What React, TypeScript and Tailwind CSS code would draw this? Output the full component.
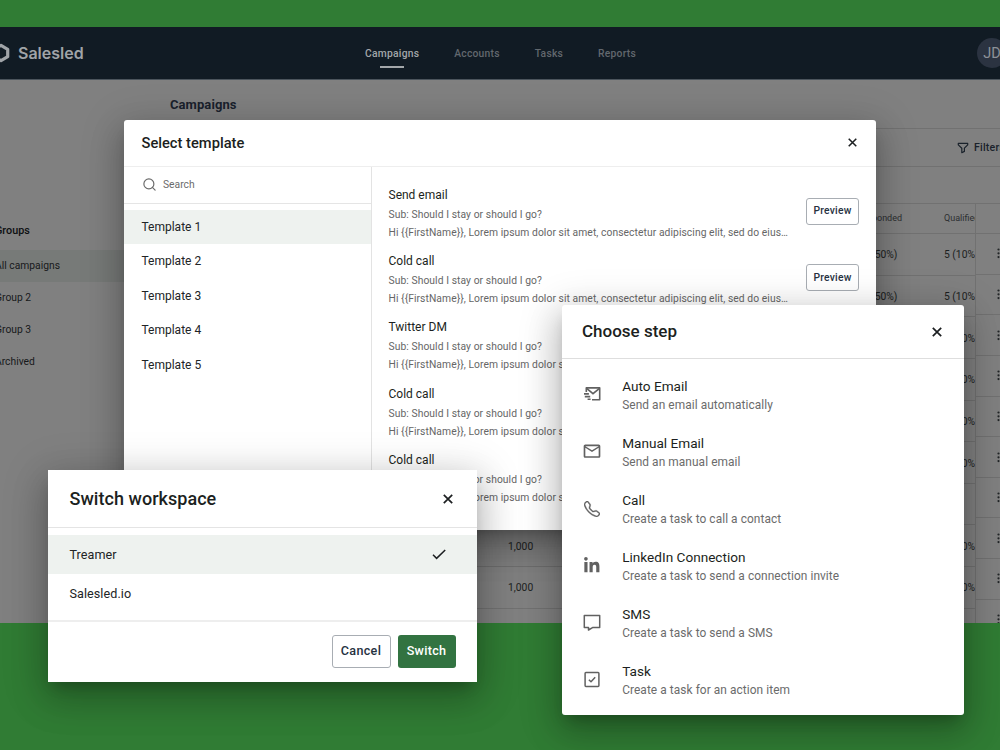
import React, { useState } from "react";
import { BsTelephone } from "react-icons/bs";
import { FaLinkedinIn } from "react-icons/fa";
import { MdOutlineEmail } from "react-icons/md";
import { Search } from "lucide-react";

const NAV = ["Campaigns", "Accounts", "Tasks", "Reports"];
const GROUPS = ["All campaigns", "Group 2", "Group 3", "Archived"];
const TEMPLATES = ["Template 1", "Template 2", "Template 3", "Template 4", "Template 5"];
const MESSAGES = ["Send email", "Cold call", "Twitter DM", "Cold call", "Cold call"];
const WORKSPACES = ["Treamer", "Salesled.io"];

// The seventh campaign has no stats yet
const ROWS = [true, true, true, true, true, true, false, true, true];

const CloseIcon = ({ size }: { size: number }) => (
  <svg width={size} height={size} viewBox="0 0 10 10" fill="none" stroke="#1c1f21" strokeWidth="1.7">
    <path d="M0.8 0.8l8.4 8.4M9.2 0.8L0.8 9.2" />
  </svg>
);

const LogoIcon = () => (
  <svg width="18" height="20" viewBox="0 0 18 20" fill="none" stroke="#a0a4a8" strokeWidth="3.2" strokeLinejoin="round">
    <path d="M9 2.4l6.7 3.9v7.4L9 17.6l-6.7-3.9V6.3z" />
  </svg>
);

const FilterIcon = () => (
  <svg
    className="shrink-0"
    width="12"
    height="12"
    viewBox="0 0 12 12"
    fill="none"
    stroke="#1a222b"
    strokeWidth="1.2"
    strokeLinejoin="round"
  >
    <path d="M1.3 1.3h9.4v1.6L7.4 6.2v3.2L4.8 10.7V6.2L1.3 2.9z" />
  </svg>
);

const GripIcon = () => (
  <svg width="10" height="11" viewBox="0 0 10 11" fill="#222527">
    <circle cx="1.5" cy="1.5" r="1.1" />
    <circle cx="1.5" cy="5.3" r="1.1" />
    <circle cx="1.5" cy="9.1" r="1.1" />
    <circle cx="5" cy="1.5" r="1.1" />
    <circle cx="5" cy="5.3" r="1.1" />
    <circle cx="5" cy="9.1" r="1.1" />
  </svg>
);

const AutoEmailIcon = () => (
  <svg width="20" height="20" viewBox="0 0 20 20" fill="none" stroke="#616161" strokeWidth="1.6">
    <path d="M4.3 8V3.9h13.4v11.8H10" strokeLinejoin="round" />
    <path d="M4.6 4.3l6.4 5.3 6.5-5.3" />
    <path d="M2 9.9h4.9M2.8 12.6h5.4M5.6 15.3h3" />
  </svg>
);

const SmsIcon = () => (
  <svg width="20" height="20" viewBox="0 0 20 20" fill="none" stroke="#616161" strokeWidth="1.5" strokeLinejoin="round">
    <path d="M2.3 2.4h15.4v12.2h-7.2l-4 2.4v-2.4H2.3z" />
  </svg>
);

const TaskIcon = () => (
  <svg width="20" height="20" viewBox="0 0 20 20" fill="none" stroke="#616161" strokeWidth="1.5" strokeLinejoin="round">
    <rect x="3.1" y="2.6" width="13.8" height="13.8" rx="0.8" />
    <path d="M6.9 9.7l2.1 2.1 4.2-4.6" />
  </svg>
);

const STEPS = [
  { title: "Auto Email", text: "Send an email automatically", icon: <AutoEmailIcon /> },
  { title: "Manual Email", text: "Send an manual email", icon: <MdOutlineEmail size={20.4} /> },
  { title: "Call", text: "Create a task to call a contact", icon: <BsTelephone size={16} strokeWidth={0.4} /> },
  { title: "LinkedIn Connection", text: "Create a task to send a connection invite", icon: <FaLinkedinIn size={17.5} /> },
  { title: "SMS", text: "Create a task to send a SMS", icon: <SmsIcon /> },
  { title: "Task", text: "Create a task for an action item", icon: <TaskIcon /> },
];

const Header = () => (
  <header className="flex h-[53px] shrink-0 items-center border-b border-[#4b545c] bg-[#111b24]">
    <div className="-ml-2 flex w-[373px] items-center gap-2">
      <LogoIcon />
      <span className="font-[Inter] text-base font-semibold text-[#a0a4a8]">Salesled</span>
    </div>
    <nav className="flex flex-1 gap-[35px] pt-[2px] text-[10.3px] font-medium tracking-[0.24px] text-[#62686e]">
      {NAV.map((item, i) => (
        <a key={item} className={i === 0 ? "relative text-[#a3a7aa]" : "relative"}>
          {item}
          {i === 0 && <span className="absolute top-[20px] left-[15px] h-[1.5px] w-6 bg-[#a3a7aa]" />}
        </a>
      ))}
    </nav>
    <div className="-mr-[7px] flex size-[30px] items-center justify-center rounded-full bg-[#2b3341] pt-[2px] text-[14.5px] text-[#8d9198]">
      JD
    </div>
  </header>
);

const Sidebar = () => (
  <aside className="w-[146px] shrink-0 pt-[142px] text-[10.3px] text-[#17191b]">
    <p className="-ml-[5px] mb-[10px] h-[18px] text-[10.8px] leading-[18px] font-medium text-[#0d0f11]">Groups</p>
    {GROUPS.map((group, i) => (
      <div key={group} className={i === 0 ? "flex h-8 items-center bg-[#777a78]" : "flex h-8 items-center"}>
        <span className="-ml-[5px]">{group}</span>
      </div>
    ))}
  </aside>
);

const Table = () => (
  <div className="flex flex-1 overflow-hidden border-t border-[#717171] text-[10.3px] text-[#1c1f21]">
    <div className="w-[806px] shrink-0 overflow-hidden border-r border-[#717171]">
      <div className="grid h-[30px] grid-cols-[338px_349px_87px_60px] items-center border-b border-[#717171] pt-px text-[9px] text-[#2c2f31]">
        <span />
        <span>Contacts</span>
        <span>Responded</span>
        <span>Qualified</span>
      </div>
      {ROWS.map((filled, i) => (
        <div key={i} className="grid h-[41.65px] grid-cols-[338px_349px_87px_60px] items-center border-b border-[#717171] pt-[1.5px]">
          {filled && (
            <>
              <span />
              <span>1,000</span>
              <span>10 (50%)</span>
              <span>5 (10%)</span>
            </>
          )}
        </div>
      ))}
    </div>
    <div className="w-10 shrink-0">
      <div className="h-[30px] border-b border-[#717171]" />
      {[...ROWS, true].map((_, i) => (
        <div key={i} className="flex h-[40.65px] items-center border-b border-[#717171] pl-[21px]">
          <GripIcon />
        </div>
      ))}
    </div>
  </div>
);

const SelectTemplate = () => {
  const [active, setActive] = useState(TEMPLATES[0]);

  return (
    <section className="absolute top-[120px] left-[124px] flex h-[410px] w-[752px] flex-col rounded-[3px] bg-white shadow-[0_9px_13px_-6px_rgba(0,0,0,0.22),0_16px_33px_3px_rgba(0,0,0,0.17),0_8px_40px_7px_rgba(0,0,0,0.14)]">
      <div className="flex h-[46.5px] shrink-0 items-center justify-between border-b-[1.5px] border-[#eeeeee] pr-[19px] pl-[17.5px]">
        <h2 className="pt-px text-[14.7px] font-medium text-[#1c1f21]">Select template</h2>
        <CloseIcon size={9} />
      </div>
      <div className="flex min-h-0 flex-1">
        <div className="w-[248px] shrink-0 border-r border-[#e3e3e3]">
          <div className="mb-[5.8px] flex h-[37.5px] items-center gap-1.5 border-b border-[#e5e5e5] pl-[18px] text-[10.3px] text-[#6b6b6b]">
            <Search size={15} strokeWidth={1.9} />
            Search
          </div>
          {TEMPLATES.map((name) => (
            <button
              key={name}
              onClick={() => setActive(name)}
              className={
                name === active
                  ? "flex h-[34.4px] w-full items-center bg-[#eef2ef] pl-[17.5px] text-xs text-[#212426]"
                  : "flex h-[34.4px] w-full items-center pl-[17.5px] text-xs text-[#212426]"
              }
            >
              {name}
            </button>
          ))}
        </div>
        <div className="flex-1 pt-[18px] pr-[17px] pl-[16.5px]">
          {MESSAGES.map((title, i) => (
            <div key={i} className="flex h-[66.4px] items-start justify-between">
              <div className="text-[10.3px] tracking-[0.07px] text-[#666666]">
                <h3 className="text-xs leading-5 tracking-normal text-[#1c1f21]">{title}</h3>
                <p className="mt-px leading-[18px]">Sub: Should I stay or should I go?</p>
                <p className="leading-[17px] whitespace-nowrap">
                  {"Hi {{FirstName}}, Lorem ipsum dolor sit amet, consectetur adipiscing elit, sed do eius…"}
                </p>
              </div>
              <button className="mt-[13px] h-[27px] w-[53px] shrink-0 rounded-[3px] border border-[#a8adb3] text-[10.3px] font-medium tracking-[0.25px] text-[#26323f]">
                Preview
              </button>
            </div>
          ))}
        </div>
      </div>
    </section>
  );
};

const SwitchWorkspace = () => {
  const [current, setCurrent] = useState(WORKSPACES[0]);

  return (
    <section className="absolute top-[470px] left-12 flex h-[212px] w-[429px] flex-col bg-white shadow-[0_9px_13px_-6px_rgba(0,0,0,0.22),0_16px_33px_3px_rgba(0,0,0,0.17),0_8px_40px_7px_rgba(0,0,0,0.14)]">
      <div className="flex h-[58px] items-center justify-between border-b border-[#e4e4e4] pr-6 pl-[21.5px]">
        <h2 className="text-lg font-medium tracking-[0.04px] text-[#1c1f21]">Switch workspace</h2>
        <CloseIcon size={10} />
      </div>
      <div className="h-[94px] border-b-2 border-[#eeeeee] pt-[7px]">
        {WORKSPACES.map((name) => (
          <button
            key={name}
            onClick={() => setCurrent(name)}
            className={
              name === current
                ? "flex h-[39.3px] w-full items-center justify-between bg-[#eef2ef] pr-[31px] pl-[21.5px] text-[12.6px] tracking-[0.06px] text-[#212426]"
                : "flex h-[39.3px] w-full items-center justify-between pr-[31px] pl-[21.5px] text-[12.6px] tracking-[0.06px] text-[#212426]"
            }
          >
            <span className="pt-px">{name}</span>
            {name === current && (
              <svg width="14" height="11" viewBox="0 0 14 11" fill="none" stroke="#1c1f21" strokeWidth="1.5">
                <path d="M1 5.8l3.6 3.6L13.2 1" />
              </svg>
            )}
          </button>
        ))}
      </div>
      <div className="flex flex-1 items-center justify-end gap-[7px] pr-[21.5px] pb-[1.5px] text-[12.6px] font-medium tracking-[0.3px]">
        <button className="h-[33px] w-[59px] rounded-[3px] border border-[#a8adb3] text-[#26323f]">Cancel</button>
        <button className="h-[33px] w-[58px] rounded-[3px] bg-[#327341] text-white">Switch</button>
      </div>
    </section>
  );
};

const ChooseStep = () => (
  <section className="absolute top-[305px] left-[562px] h-[410px] w-[402px] rounded-[3px] bg-white shadow-[0_9px_13px_-6px_rgba(0,0,0,0.22),0_16px_33px_3px_rgba(0,0,0,0.17),0_8px_40px_7px_rgba(0,0,0,0.14)]">
    <div className="mb-[7.3px] flex h-[54px] items-center justify-between border-b border-[#dedede] pr-[22px] pl-5">
      <h2 className="pt-px text-[17px] font-medium text-[#1c1f21]">Choose step</h2>
      <CloseIcon size={10} />
    </div>
    {STEPS.map((step) => (
      <div key={step.title} className="flex h-[57.1px] items-center pl-5">
        <div className="mr-[20.2px] mb-px flex w-5 shrink-0 items-center justify-center text-[#616161]">{step.icon}</div>
        <div>
          <h3 className="text-[13.6px] leading-5 text-[#1c1f21]">{step.title}</h3>
          <p className="pt-px text-[11.9px] leading-[17px] tracking-[0.07px] text-[#6b6b6b]">{step.text}</p>
        </div>
      </div>
    ))}
  </section>
);

const App = () => {
  return (
    <div className="relative h-[750px] w-[1000px] overflow-hidden bg-[#307c34] pt-[27px] font-[Roboto,sans-serif]">
      <div className="flex h-[596px] flex-col overflow-hidden bg-[#808080]">
        <Header />
        <div className="flex min-h-0 flex-1">
          <Sidebar />
          <main className="flex min-w-0 flex-1 flex-col pl-6">
            <h1 className="flex h-12 shrink-0 items-center pt-px text-[13px] font-bold tracking-[0.08px] text-[#1a222d]">
              Campaigns
            </h1>
            <div className="flex h-[39px] shrink-0 items-center border-y border-[#717171] pl-[786.5px] text-[10.6px] font-medium tracking-[0.2px] text-[#1a222b]">
              <FilterIcon />
              <span className="pl-[5.5px]">Filters</span>
            </div>
            <div className="h-[36px] shrink-0" />
            <Table />
          </main>
        </div>
      </div>

      <SelectTemplate />
      <SwitchWorkspace />
      <ChooseStep />
    </div>
  );
};

export default App;
